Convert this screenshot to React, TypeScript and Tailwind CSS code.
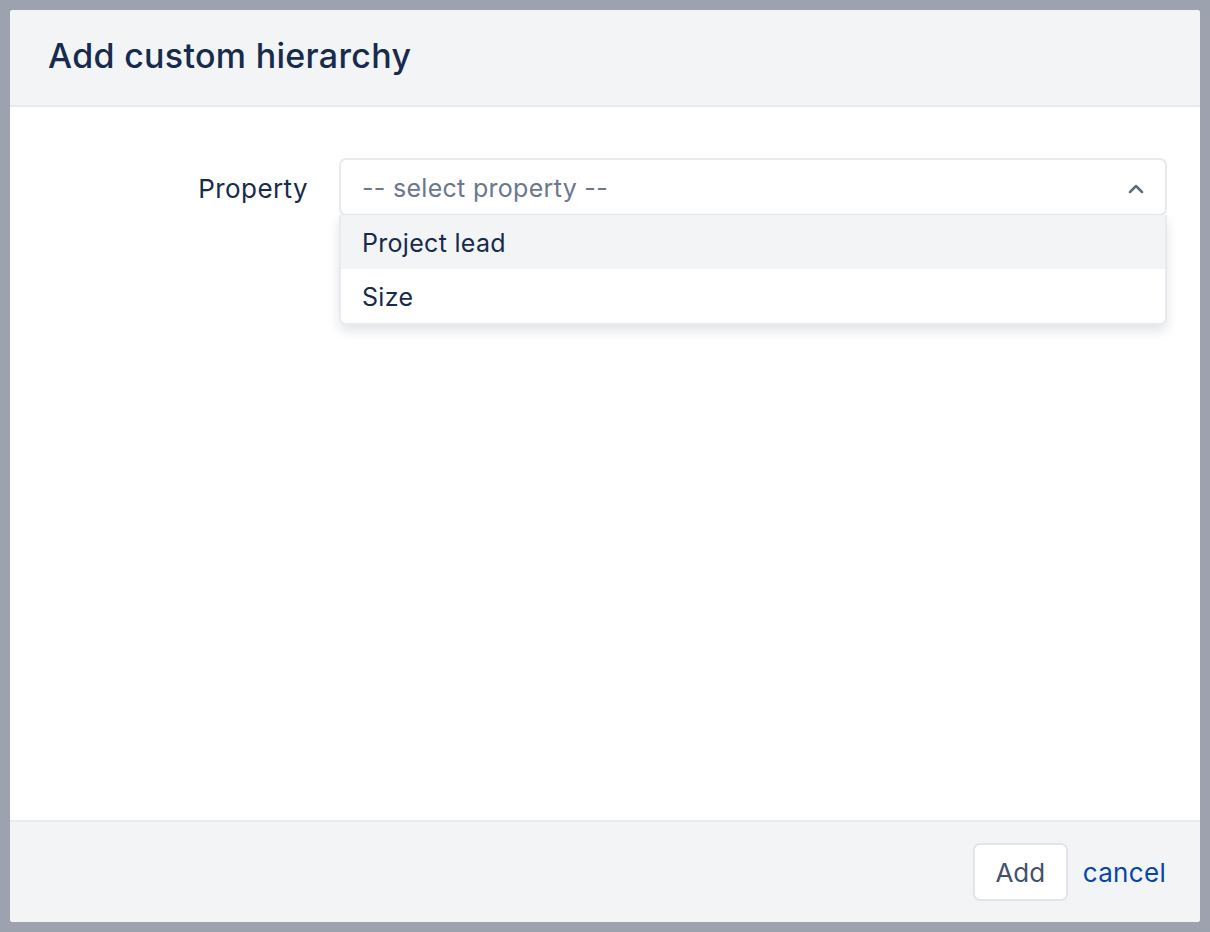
import { ChevronUp } from 'lucide-react'

const options = ['Project lead', 'Size']

export default function App() {
  return (
    <div
      className="w-[1210px] h-[932px] bg-[#9ca3af] p-[10px]"
      style={{ fontFamily: 'Inter, "Noto Sans", sans-serif' }}
    >
      <div className="flex flex-col h-full bg-white rounded-[3px] overflow-hidden">
        {/* Header */}
        <div className="h-[97px] shrink-0 bg-[#f3f4f6] border-b-2 border-[#e9eaee] flex items-center px-[38px] pb-[4px]">
          <h1 className="text-[34px] font-medium text-[#172b4d] tracking-[0.3px]">Add custom hierarchy</h1>
        </div>

        {/* Body */}
        <div className="flex-1 pt-[51px]">
          <div className="flex items-start">
            <label className="w-[298px] text-right text-[26px] text-[#172b4d] h-[60px] flex items-center justify-end tracking-[0.4px]">
              Property
            </label>
            <div className="ml-[31px] w-[828px] relative">
              <div className="h-[58px] border-2 border-[#e9eaee] rounded-[7px] flex items-center justify-between pl-[21px] pr-[17px] pt-[3px] bg-white">
                <span className="text-[25px] text-[#6b778c] tracking-[0.3px]">-- select property --</span>
                <ChevronUp className="w-[24px] h-[24px] text-[#5e6c84]" strokeWidth={2.5} />
              </div>
              <div className="absolute left-0 right-0 top-[57px] bg-white border-2 border-t-0 border-[#e9eaee] rounded-b-[7px] shadow-[0_6px_12px_rgba(9,30,66,0.12)] overflow-hidden">
                {options.map((o, i) => (
                  <div
                    key={o}
                    className={`h-[54px] flex items-center pl-[21px] pt-[3px] text-[25px] text-[#172b4d] tracking-[0.3px] ${
                      i === 0 ? 'bg-[#f3f4f6]' : 'bg-white'
                    }`}
                  >
                    {o}
                  </div>
                ))}
              </div>
            </div>
          </div>
        </div>

        {/* Footer */}
        <div className="h-[102px] shrink-0 bg-[#f3f4f6] border-t-2 border-[#e9eaee] flex items-center justify-end pr-[34px] gap-[15px]">
          <button className="h-[58px] w-[95px] bg-white border-2 border-[#e2e4e9] rounded-[7px] text-[26px] text-[#42526e]">
            Add
          </button>
          <a className="text-[26px] text-[#0747a6] tracking-[0.3px]">cancel</a>
        </div>
      </div>
    </div>
  )
}
